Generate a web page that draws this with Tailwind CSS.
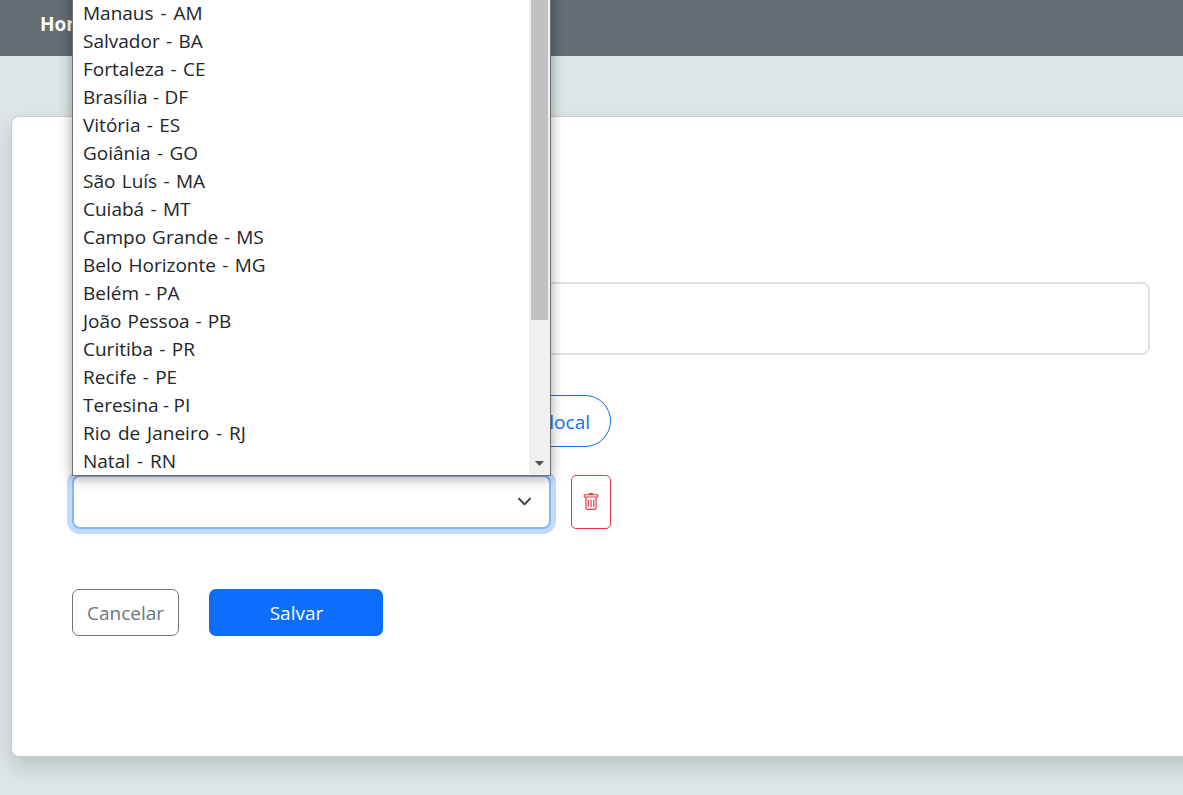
<!DOCTYPE html>
<html lang="pt-BR">
<head>
<meta charset="utf-8">
<title>Cadastro</title>
<script src="https://cdn.jsdelivr.net/npm/@tailwindcss/browser@4"></script>
</head>
<body class="relative h-[795px] overflow-hidden bg-[#dde5e8] font-['Open_Sans','Noto_Sans',sans-serif] text-[19px] text-[#212529]">
  <nav class="flex h-14 items-center bg-[#636e72] px-10 pb-[7px] font-bold text-white">
    <a class="w-8 overflow-hidden">Home</a>
  </nav>

  <main class="mt-[60px] ml-[11px] h-[641px] w-[1220px] rounded-lg border border-[#c9cdd0] bg-white px-[60px] pt-[165px] shadow-[0_10px_20px_rgba(0,0,0,0.15)]">
    <div class="h-[73px] w-[1078px] rounded-lg border-2 border-[#dee2e6]"></div>
    <div class="mt-10 flex w-[539px] justify-end">
      <button class="flex h-[52px] items-center rounded-full border border-[#0d6efd] px-5 pt-[3px] whitespace-nowrap text-[#0d6efd]">Adicionar local</button>
    </div>
    <div class="mt-7 flex gap-5">
      <div class="flex h-[54px] w-[479px] items-center justify-end rounded-lg border-2 border-[#86b7fe] bg-white pr-[17.5px] pb-[2px] shadow-[0_0_0_5px_rgba(13,110,253,0.25)]">
        <svg class="size-[15px]" viewBox="0 0 16 16" fill="none" stroke="#343a40" stroke-width="2" stroke-linecap="round" stroke-linejoin="round"><path d="m2 5 6 6 6-6"/></svg>
      </div>
      <button class="flex h-[54px] w-10 items-center justify-center rounded-[5px] border border-[#dc3545] text-[#dc3545]">
        <svg class="size-[18px]" viewBox="0 0 16 16" fill="currentColor"><path d="M5.5 5.5A.5.5 0 0 1 6 6v6a.5.5 0 0 1-1 0V6a.5.5 0 0 1 .5-.5m2.500 0a.5.5 0 0 1 .5.5v6a.5.5 0 0 1-1 0V6a.5.5 0 0 1 .5-.5m3 .5a.5.5 0 0 0-1 0v6a.5.5 0 0 0 1 0z"/><path d="M14.500 3a1 1 0 0 1-1 1H13v9a2 2 0 0 1-2 2H5a2 2 0 0 1-2-2V4h-.5a1 1 0 0 1-1-1V2a1 1 0 0 1 1-1H6a1 1 0 0 1 1-1h2a1 1 0 0 1 1 1h3.500a1 1 0 0 1 1 1zM4.118 4 4 4.059V13a1 1 0 0 0 1 1h6a1 1 0 0 0 1-1V4.059L11.882 4zM2.500 3h11V2h-11z"/></svg>
      </button>
    </div>
    <div class="mt-[60px] flex gap-[30px]">
      <button class="h-[47px] w-[107px] rounded-[7px] border border-[#6c757d] pt-[2px] text-[#6c757d]">Cancelar</button>
      <button class="h-[47px] w-[174px] rounded-[7px] bg-[#0d6efd] pt-[2px] pl-px text-white">Salvar</button>
    </div>
  </main>

  <div class="absolute top-[-10px] left-[72px] flex h-[486px] w-[479px] justify-between border border-[#707070] bg-white shadow-[0_2px_12px_rgba(0,0,0,0.38)]">
    <ul class="pt-[8px] pl-[10px] leading-7 whitespace-nowrap [word-spacing:1.4px]">
      <li class="[word-spacing:2px]">Manaus - AM</li>
      <li>Salvador - BA</li>
      <li>Fortaleza - CE</li>
      <li class="[word-spacing:0.5px]">Brasília - DF</li>
      <li>Vitória - ES</li>
      <li>Goiânia - GO</li>
      <li>São Luís - MA</li>
      <li>Cuiabá - MT</li>
      <li class="[word-spacing:1px]">Campo Grande - MS</li>
      <li>Belo Horizonte - MG</li>
      <li class="[word-spacing:0.5px]">Belém - PA</li>
      <li class="[word-spacing:1px]">João Pessoa - PB</li>
      <li>Curitiba - PR</li>
      <li>Recife - PE</li>
      <li class="[word-spacing:-0.5px]">Teresina - PI</li>
      <li class="[word-spacing:2px]">Rio de Janeiro - RJ</li>
      <li class="[word-spacing:2px]">Natal - RN</li>
    </ul>
    <div class="flex w-[21px] flex-col items-center justify-between bg-[#f0f0f0] pb-[9px]">
      <div class="h-[329px] w-[17px] bg-[#c1c1c1]"></div>
      <svg class="h-[5px] w-[9px]" viewBox="0 0 9 5" fill="#505050"><path d="M0 0h9L4.500 5z"/></svg>
    </div>
  </div>
</body>
</html>
